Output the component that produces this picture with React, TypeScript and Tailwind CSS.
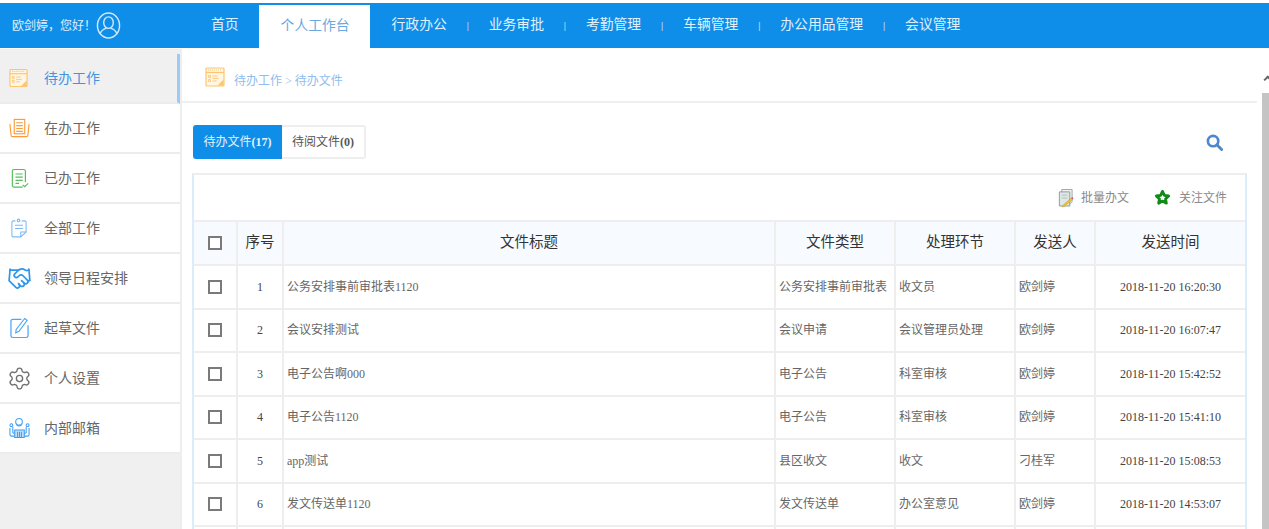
import { Handshake, Settings } from "lucide-react"

const font = "font-['Liberation_Serif','Noto_Sans_CJK_SC',serif]"

function CalendarIcon({ className }: { className?: string }) {
    return (
        <svg viewBox="0 0 20 20" className={className} fill="none" stroke="#fdc56e" strokeWidth="1.2">
            <rect x="1" y="1" width="18" height="18" rx="1" fill="#fff6e6" />
            <path d="M1 5.5h18" />
            <path d="M3 3h14" strokeDasharray="1 1" />
            <path d="M3.5 8.5h2v2h-2zM3.5 12.5h2v2h-2z" strokeWidth="0.9" />
            <path d="M7.5 9h5M7.5 11.5h6M7.5 14h4" strokeWidth="0.9" />
            <path d="M14 18l4-4v4z" fill="#fdc56e" />
        </svg>
    )
}

function TrayIcon() {
    return (
        <svg viewBox="0 0 22 20" className="w-[21px] h-[20px]" fill="none" stroke="#fb9c3c" strokeWidth="1.2">
            <rect x="5.5" y="1" width="11" height="15" fill="#fff" />
            <path d="M7.5 4.5h7M7.5 7.5h7M7.5 10.5h7M7.5 13.5h7" />
            <path d="M1 6l1.2 11.5c0 1 .8 1.5 1.6 1.5h14.4c.8 0 1.6-.5 1.6-1.5L21 6" />
        </svg>
    )
}

function DoneIcon() {
    return (
        <svg viewBox="0 0 20 22" className="w-[18px] h-[21px] ml-[2px]" fill="none" stroke="#56bd5b" strokeWidth="1.3">
            <path d="M13 20.5H3.5A2 2 0 0 1 1.5 18.5V3A2 2 0 0 1 3.5 1H14a2 2 0 0 1 2 2v12" />
            <path d="M5 6h8M5 9.5h8M5 13h8M5 16.5h4" />
            <path d="M13 18l2.2 2.2L19 16.5" />
        </svg>
    )
}

function ClipIcon() {
    return (
        <svg viewBox="0 0 18 22" className="w-[16px] h-[22px] ml-[2px]" fill="none" stroke="#7cb9f8" strokeWidth="1.2">
            <path d="M5 3H2.5A1.5 1.5 0 0 0 1 4.5v15A1.5 1.5 0 0 0 2.5 21H11l6-5.5V4.5A1.5 1.5 0 0 0 15.5 3H12" />
            <circle cx="8.5" cy="2.5" r="1.5" />
            <path d="M4.5 8h9M4.5 11.5h9" />
            <path d="M11 21v-5.5h6" />
        </svg>
    )
}

function EditIcon() {
    return (
        <svg viewBox="0 0 20 22" className="w-[19px] h-[22px] ml-[1px]" fill="none" stroke="#4ba8f5" strokeWidth="1.3">
            <path d="M12 2H3A2 2 0 0 0 1 4v15a2 2 0 0 0 2 2h14a2 2 0 0 0 2-2V8" />
            <path d="M15.5 1 18 3 9.5 14.5 6 16l.5-3.5Z" strokeWidth="1.2" />
        </svg>
    )
}

function MailPeopleIcon() {
    return (
        <svg viewBox="0 0 22 22" className="w-[21px] h-[22px]" fill="none" stroke="#3f9df0" strokeWidth="1.1">
            <circle cx="10.5" cy="4.5" r="3.5" />
            <path d="M8 8c1.5 1 3.5 1 5 0" />
            <circle cx="2.5" cy="8" r="1.5" />
            <circle cx="19.5" cy="8" r="1.5" />
            <path d="M1 11v7c0 1 1 1.5 2 1.5h3M21 11v7c0 1-1 1.5-2 1.5h-3" />
            <path d="M4 10v6l2 1M18 10v6l-2 1" />
            <path d="M6 13h10v8H6zM9 15v6M11 15v6M13 15v6" fill="#bfe0fb" />
        </svg>
    )
}

function UserCircle() {
    return (
        <svg viewBox="0 0 26 28" className="w-[25px] h-[27px]" fill="none" stroke="#cfe8fb" strokeWidth="1.5">
            <ellipse cx="13" cy="14" rx="11.5" ry="13" />
            <ellipse cx="13" cy="11" rx="5" ry="6" />
            <path d="M4 23c1.5-4 4.5-5.5 6.5-6M22 23c-1.5-4-4.5-5.5-6.5-6" />
        </svg>
    )
}

function BatchIcon() {
    return (
        <svg viewBox="0 0 18 20" className="w-[17px] h-[20px]" fill="none">
            <path d="M5 1h11v13l-3 3H5z" fill="#eef1f1" stroke="#9aa8a8" />
            <path d="M2.5 3.5h11v15h-11z" fill="#dfe6e6" stroke="#8c9a9a" />
            <path d="M5 7h6M5 10h6" stroke="#b4bfbf" />
            <path d="M6 18l9-8 1.5 1.5-9 7.5-2 .5Z" fill="#e8c13c" stroke="#c89a20" strokeWidth="0.5" />
            <path d="M15 10l1.5 1.5 1-1.2-1.3-1.3Z" fill="#e25555" />
        </svg>
    )
}

function StarIcon() {
    return (
        <svg viewBox="0 0 18 18" className="w-[17px] h-[17px]" fill="#fff" stroke="#128a18" strokeWidth="3" strokeLinejoin="round">
            <path d="M9 2.5 11 6.800l4.500.6-3.300 3.100.9 4.500L9 12.800l-4.100 2.200.9-4.500-3.300-3.100 4.500-.6Z" />
        </svg>
    )
}

function SearchIcon() {
    return (
        <svg viewBox="0 0 18 18" className="w-[17px] h-[17px]" fill="none" stroke="#4b88cf">
            <circle cx="7.5" cy="7.5" r="5.5" strokeWidth="2.800" />
            <path d="m11.500 11.500 5 5" strokeWidth="3" strokeLinecap="round" />
        </svg>
    )
}

const navItems = [
    { label: "首页" },
    { label: "个人工作台", active: true },
    { label: "行政办公", sep: true },
    { label: "业务审批", sep: true },
    { label: "考勤管理", sep: true },
    { label: "车辆管理", sep: true },
    { label: "办公用品管理", sep: true },
    { label: "会议管理" },
]

const sideItems = [
    { label: "待办工作", icon: <CalendarIcon className="w-[19px] h-[20px]" />, active: true },
    { label: "在办工作", icon: <TrayIcon /> },
    { label: "已办工作", icon: <DoneIcon /> },
    { label: "全部工作", icon: <ClipIcon /> },
    { label: "领导日程安排", icon: <Handshake size={25} color="#2d96ee" strokeWidth={1.6} className="-ml-[2px]" /> },
    { label: "起草文件", icon: <EditIcon /> },
    { label: "个人设置", icon: <Settings size={25} color="#6f6f6f" strokeWidth={1.3} className="-ml-[2px]" /> },
    { label: "内部邮箱", icon: <MailPeopleIcon /> },
]

const rows = [
    ["1", "公务安排事前审批表1120", "公务安排事前审批表", "收文员", "欧剑婷", "2018-11-20 16:20:30"],
    ["2", "会议安排测试", "会议申请", "会议管理员处理", "欧剑婷", "2018-11-20 16:07:47"],
    ["3", "电子公告啊000", "电子公告", "科室审核", "欧剑婷", "2018-11-20 15:42:52"],
    ["4", "电子公告1120", "电子公告", "科室审核", "欧剑婷", "2018-11-20 15:41:10"],
    ["5", "app测试", "县区收文", "收文", "刁桂军", "2018-11-20 15:08:53"],
    ["6", "发文传送单1120", "发文传送单", "办公室意见", "欧剑婷", "2018-11-20 14:53:07"],
]

function Check() {
    return <div className="w-[14px] h-[14px] mx-auto border-2 border-[#7a7a7a] bg-white"></div>
}

function App() {
    return (
        <div className={`${font} h-screen overflow-hidden bg-white pt-[3px] flex flex-col`}>
            {/* 顶部导航 */}
            <div className="h-[45px] shrink-0 bg-[#0f8ee9] flex items-end text-[#e0f0fc]">
                <div className="w-[211px] h-full shrink-0 flex items-center pl-3 text-[12px]">
                    <span className="w-[84px]">欧剑婷，您好！</span>
                    <UserCircle />
                </div>
                <ul className="flex items-end h-full text-[13.8px]">
                    {navItems.map((item, i) => (
                        <li key={i} className="flex items-center h-full">
                            {item.active ? (
                                <a className="h-[43px] mt-[2px] ml-[20.5px] mr-[21.5px] pl-[21.5px] pr-[20.5px] flex items-center bg-white text-[#6ba7e0] whitespace-nowrap">
                                    {item.label}
                                </a>
                            ) : (
                                <a className="whitespace-nowrap">{item.label}</a>
                            )}
                            {item.sep && <span className="w-[42px] text-center text-[11px]">|</span>}
                        </li>
                    ))}
                </ul>
            </div>

            <div className="flex-1 flex min-h-0 mt-[1px]">
                {/* 左侧菜单 */}
                <div className="w-[182px] shrink-0 bg-[#f0f0f0] border-r-2 border-[#eeeeee] pt-[5px]">
                    {sideItems.map((item) => (
                        <div
                            key={item.label}
                            className={`h-[50px] flex items-center border-b-2 border-[#ececec] ${item.active ? "bg-[#f0f0f0] border-r-[3px] border-r-[#9ccbf8]" : "bg-white"}`}
                        >
                            <span className="w-[44px] pl-[9px] flex items-center shrink-0">{item.icon}</span>
                            <span className={`text-[14px] ${item.active ? "text-[#3f94e4]" : "text-[#666666]"}`}>{item.label}</span>
                        </div>
                    ))}
                </div>

                {/* 主内容 */}
                <div className="flex-1 min-w-0 flex">
                    <div className="w-[1075px] shrink-0">
                        <div className="h-[54px] flex items-center border-b-2 border-[#efefef] pl-[23px] gap-[9px]">
                            <CalendarIcon className="w-[20px] h-[20px] mt-[4px]" />
                            <span className="text-[12px] text-[#8fbdee] mt-[12px]">待办工作 &gt; 待办文件</span>
                        </div>

                        <div className="pl-[10px] pr-[10px]">
                            <div className="flex items-center justify-between mt-[22px] pr-[24px]">
                                <div className="flex h-[34px] text-[12px] ml-[1px]">
                                    <span className="w-[89px] flex items-center justify-center bg-[#0f8ee9] text-[#e4f2fd] rounded-l-[3px]">
                                        待办文件<b>(17)</b>
                                    </span>
                                    <span className="w-[84px] flex items-center justify-center border-2 border-l-0 border-[#eeeeee] text-[#555555] rounded-r-[3px]">
                                        待阅文件<b>(0)</b>
                                    </span>
                                </div>
                                <SearchIcon />
                            </div>

                            <div className="mt-[14px] w-[1055px] border-2 border-b-0 border-[#eeeeee] border-l-[#dcecfb] border-r-[#dcecfb]">
                                <div className="h-[45px] flex items-center justify-end gap-[25px] pr-[18px] text-[12px] text-[#8a8a8a]">
                                    <span className="flex items-center gap-[7px]"><BatchIcon />批量办文</span>
                                    <span className="flex items-center gap-[8px]"><StarIcon />关注文件</span>
                                </div>
                                <table className="w-full table-fixed border-collapse text-[12px] text-[#666666]">
                                    <colgroup>
                                        <col className="w-[43px]" />
                                        <col className="w-[46px]" />
                                        <col className="w-[492px]" />
                                        <col className="w-[120px]" />
                                        <col className="w-[120px]" />
                                        <col className="w-[80px]" />
                                        <col />
                                    </colgroup>
                                    <thead>
                                        <tr className="h-[44px] bg-[#f7fbff] text-[14.5px] text-[#333333] border-y-2 border-[#eeeeee]">
                                            <th className="font-normal"><Check /></th>
                                            <th className="font-normal border-l-2 border-[#eeeeee]">序号</th>
                                            <th className="font-normal border-l-2 border-[#eeeeee]">文件标题</th>
                                            <th className="font-normal border-l-2 border-[#eeeeee]">文件类型</th>
                                            <th className="font-normal border-l-2 border-[#eeeeee]">处理环节</th>
                                            <th className="font-normal border-l-2 border-[#eeeeee]">发送人</th>
                                            <th className="font-normal border-l-2 border-[#eeeeee]">发送时间</th>
                                        </tr>
                                    </thead>
                                    <tbody>
                                        {rows.map((r) => (
                                            <tr key={r[0]} className="h-[43.5px] border-b-2 border-[#eeeeee]">
                                                <td><Check /></td>
                                                <td className="text-center text-[#444444] border-l-2 border-[#eeeeee]">{r[0]}</td>
                                                <td className="pl-[3px] border-l-2 border-[#eeeeee]">{r[1]}</td>
                                                <td className="pl-[3px] border-l-2 border-[#eeeeee] whitespace-nowrap">{r[2]}</td>
                                                <td className="pl-[3px] border-l-2 border-[#eeeeee]">{r[3]}</td>
                                                <td className="pl-[3px] border-l-2 border-[#eeeeee]">{r[4]}</td>
                                                <td className="text-center text-[#444444] border-l-2 border-[#eeeeee]">{r[5]}</td>
                                            </tr>
                                        ))}
                                        <tr className="h-[43.5px]">
                                            <td></td>
                                            <td className="border-l-2 border-[#eeeeee]"></td>
                                            <td className="border-l-2 border-[#eeeeee]"></td>
                                            <td className="border-l-2 border-[#eeeeee]"></td>
                                            <td className="border-l-2 border-[#eeeeee]"></td>
                                            <td className="border-l-2 border-[#eeeeee]"></td>
                                            <td className="border-l-2 border-[#eeeeee]"></td>
                                        </tr>
                                    </tbody>
                                </table>
                            </div>
                        </div>
                    </div>

                    {/* 滚动条 */}
                    <div className="ml-auto w-[7px] shrink-0 flex flex-col">
                        <div className="h-[44px] flex items-center justify-center">
                            <span className="block w-[6px] h-[6px] border-l-2 border-t-2 border-[#666666] rotate-45 mt-[16px] ml-[3px]"></span>
                        </div>
                        <div className="flex-1 bg-[#c4c4c4]"></div>
                    </div>
                </div>
            </div>
        </div>
    )
}

export default App
